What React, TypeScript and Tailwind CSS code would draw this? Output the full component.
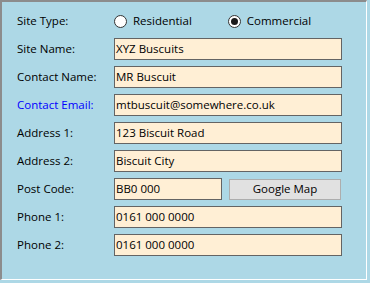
import React, { useState } from "react";

type Field = { label: string; value: string; blue?: boolean };

const fields: Field[] = [
  { label: "Site Name:", value: "XYZ Buscuits" },
  { label: "Contact Name:", value: "MR Buscuit" },
  { label: "Contact Email:", value: "mtbuscuit@somewhere.co.uk", blue: true },
  { label: "Address 1:", value: "123 Biscuit Road" },
  { label: "Address 2:", value: "Biscuit City" },
];

const phones: Field[] = [
  { label: "Phone 1:", value: "0161 000 0000" },
  { label: "Phone 2:", value: "0161 000 0000" },
];

const font = { fontFamily: '"Segoe UI", "Open Sans", "DejaVu Sans", sans-serif' };

function Radio({ label, checked, onClick }: { label: string; checked: boolean; onClick: () => void }) {
  return (
    <button type="button" onClick={onClick} className="flex items-center gap-[6px] text-[11.5px] text-black">
      <span className="flex h-[13px] w-[13px] items-center justify-center rounded-full border border-[#333] bg-white">
        {checked && <span className="h-[7px] w-[7px] rounded-full bg-[#1a1a1a]" />}
      </span>
      {label}
    </button>
  );
}

function TextBox({ value, className = "w-[228px]" }: { value: string; className?: string }) {
  return (
    <div className={`flex h-[22px] items-center border border-[#646464] bg-[#ffefd5] pl-[1px] text-[11.5px] text-black ${className}`}>
      {value}
    </div>
  );
}

function Row({ label, blue, children }: { label: string; blue?: boolean; children: React.ReactNode }) {
  return (
    <div className="flex h-[22px] items-center">
      <span className={`w-[97px] text-[11.5px] ${blue ? "text-[#0000ff]" : "text-black"}`}>{label}</span>
      {children}
    </div>
  );
}

export default function App() {
  const [siteType, setSiteType] = useState("commercial");

  return (
    <div className="h-[283px] w-[370px] bg-[#add8e6]" style={font}>
      <div className="h-[280px] w-[367px] border-t-2 border-l-2 border-r border-b border-t-[#8c8c8c] border-l-[#8c8c8c] border-r-white border-b-white pl-[15px] pt-[8px]">
        <div className="flex flex-col gap-[6px]">
          <div className="flex h-[22px] items-center">
            <span className="w-[97px] text-[11.5px] text-black">Site Type:</span>
            <div className="flex gap-[36px]">
              <Radio label="Residential" checked={siteType === "residential"} onClick={() => setSiteType("residential")} />
              <Radio label="Commercial" checked={siteType === "commercial"} onClick={() => setSiteType("commercial")} />
            </div>
          </div>
          {fields.map((f) => (
            <Row key={f.label} label={f.label} blue={f.blue}>
              <TextBox value={f.value} />
            </Row>
          ))}
          <Row label="Post Code:">
            <TextBox value="BB0 000" className="w-[108px]" />
            <button
              type="button"
              className="ml-[7px] flex h-[21px] w-[112px] items-center justify-center border border-[#adadad] bg-[#e1e1e1] text-[11.5px] text-black"
            >
              Google Map
            </button>
          </Row>
          {phones.map((f) => (
            <Row key={f.label} label={f.label}>
              <TextBox value={f.value} />
            </Row>
          ))}
        </div>
      </div>
    </div>
  );
}
